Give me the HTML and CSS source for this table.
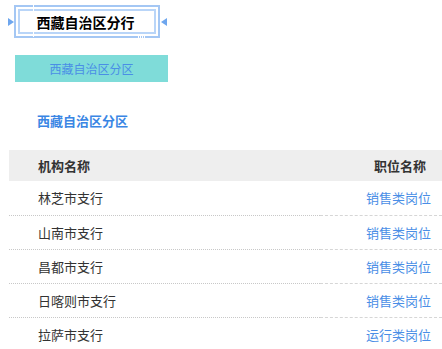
FILE: index.html
```html
<!DOCTYPE html>
<html lang="zh">
<head>
<meta charset="utf-8">
<link rel="stylesheet" href="styles.css">
</head>
<body>
<div class="title-wrap">
  <span class="tri tri-right"></span>
  <div class="title-box">
    <div class="title-inner">西藏自治区分行</div>
    <span class="gap gap-v"></span>
    <span class="gap gap-b"></span>
  </div>
  <span class="tri tri-left"></span>
</div>
<div class="tab">西藏自治区分区</div>
<h2 class="region">西藏自治区分区</h2>
<table class="jobs">
  <thead>
    <tr><th class="c-org">机构名称</th><th class="c-pos">职位名称</th></tr>
  </thead>
  <tbody>
    <tr><td class="c-org">林芝市支行</td><td class="c-pos"><a>销售类岗位</a></td></tr>
    <tr><td class="c-org">山南市支行</td><td class="c-pos"><a>销售类岗位</a></td></tr>
    <tr><td class="c-org">昌都市支行</td><td class="c-pos"><a>销售类岗位</a></td></tr>
    <tr><td class="c-org">日喀则市支行</td><td class="c-pos"><a>销售类岗位</a></td></tr>
    <tr><td class="c-org">拉萨市支行</td><td class="c-pos"><a>运行类岗位</a></td></tr>
  </tbody>
</table>
</body>
</html>
```
FILE: styles.css
```css
* { box-sizing: border-box; }
html, body { margin: 0; padding: 0; background: #fff; overflow: hidden; }
body {
  font-family: "Microsoft YaHei", "Noto Sans CJK SC", sans-serif;
  color: #333;
  width: 442px;
}
.title-wrap {
  display: flex;
  align-items: center;
  padding: 5px 0 0 8px;
  height: 38px;
}
.tri { width: 0; height: 0; border-top: 4px solid transparent; border-bottom: 4px solid transparent; }
.tri-right { border-left: 6px solid #6ea6ee; }
.tri-left { border-right: 6px solid #6ea6ee; margin-left: 1px; }
.title-box {
  position: relative;
  width: 146px;
  height: 33px;
  border: 2px solid #a4c7f4;
  padding: 2px;
}
.title-inner {
  height: 100%;
  border: 2px solid #b9d5f8;
  display: flex;
  align-items: center;
  justify-content: center;
  font-weight: bold;
  font-size: 14px;
  color: #000;
  padding-right: 3px;
}
.gap { position: absolute; background: #fff; }
.gap-v { left: 17px; top: -2px; width: 1px; height: 32px; }
.gap-b { right: 12px; bottom: -2px; width: 8px; height: 3px; background: repeating-linear-gradient(90deg, #fff 0 1px, transparent 1px 2px); }
.tab {
  margin: 17px 0 0 15px;
  width: 153px;
  height: 27px;
  background: #7fdcd9;
  color: #4a8ee6;
  font-size: 12px;
  display: flex;
  align-items: center;
  justify-content: center;
}
.region {
  margin: 30px 0 0 37px;
  font-size: 13px;
  font-weight: bold;
  color: #3a86e4;
  line-height: 18px;
}
.jobs {
  margin: 20px 0 0 9px;
  width: 433px;
  border-collapse: collapse;
  font-size: 13px;
}
.jobs th {
  background: #eeeeee;
  height: 31px;
  padding: 0;
  font-weight: bold;
  color: #333;
}
.jobs th.c-org { text-align: left; padding-left: 29px; }
.jobs th.c-pos { text-align: right; padding-right: 16px; }
.jobs td {
  height: 34px;
  padding: 0;
  border-bottom: 1px dotted #c8c8c8;
}
.jobs td.c-org { padding-left: 29px; }
.jobs td.c-pos { text-align: right; padding-right: 11px; width: 122px; border-bottom: 1px dashed #d6d6d6; }
.jobs tr:last-child td { border-bottom: none; }
.jobs a { color: #4a8ee6; text-decoration: none; }
```
